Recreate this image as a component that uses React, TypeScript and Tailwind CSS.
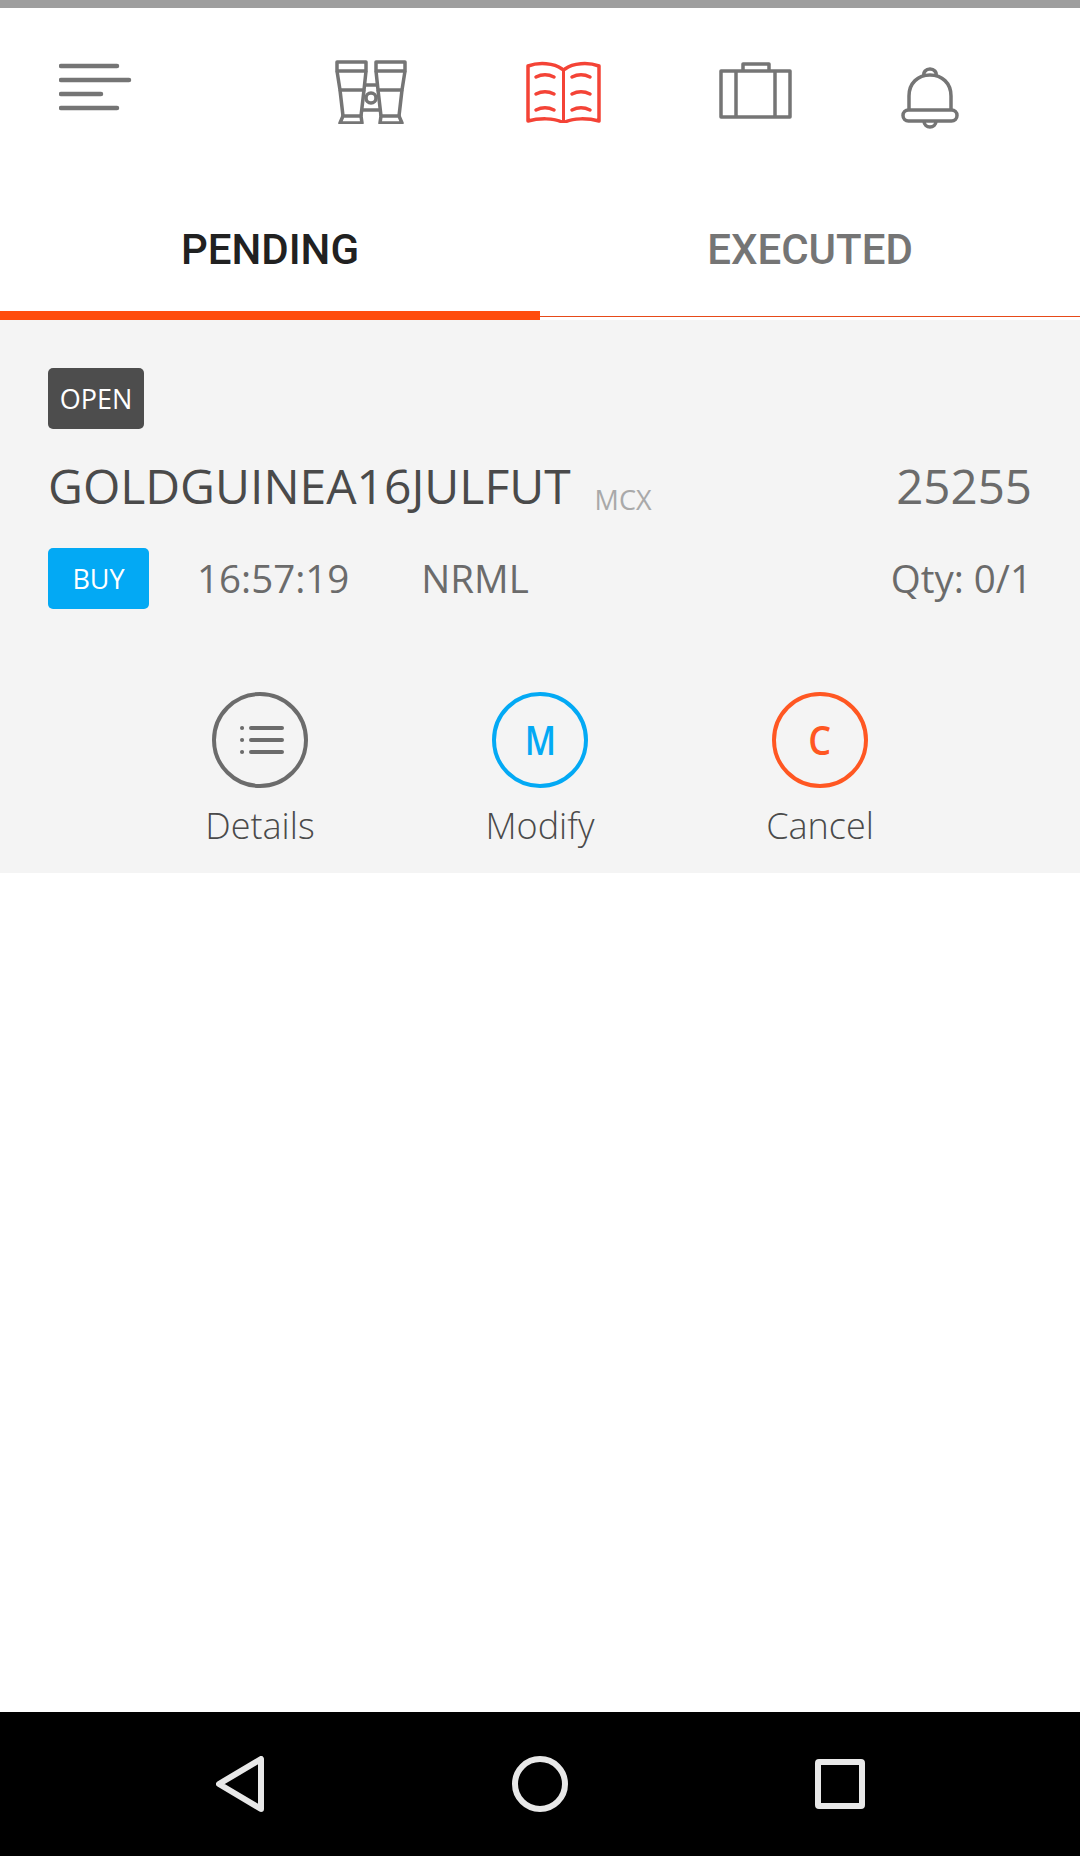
const openSans = '[font-family:"Open_Sans",sans-serif]'

function MenuIcon() {
  return (
    <svg width="73" height="50" viewBox="0 0 73 50" fill="none" stroke="#757575" strokeWidth="4.5" strokeLinecap="round">
      <path d="M2 3h56M2 17h68M2 31h40M2 45h56" />
    </svg>
  )
}

function BinocularsIcon() {
  return (
    <svg width="72" height="64" viewBox="0 0 72 64" fill="none" stroke="#757575" strokeWidth="3.5" strokeLinejoin="round">
      <path d="M2 2h29v9H2zM41 2h29v9H41z" />
      <path d="M2 11l3 19h24l2-19M41 11l2 19h24l3-19" />
      <path d="M5 30l3 26M29 30l-3 26M43 30l3 26M67 30l-3 26" />
      <path d="M8 56l-3 7h22l-1-7zM46 56l-1 7h22l-3-7zM8 56h18M46 56h18" />
      <path d="M28 25h16M27 50h18" />
      <circle cx="36" cy="38" r="5" />
    </svg>
  )
}

function BookIcon() {
  return (
    <svg width="75" height="62" viewBox="0 0 75 62" fill="none" stroke="#f44336" strokeWidth="3.5" strokeLinecap="round" strokeLinejoin="round">
      <path d="M36 8C28 2 13 1 2 5v55c11-3 26-3 34 1 1 1 2 1 3 0 8-4 23-4 34-1V5C62 1 47 2 39 8c-1 1-2 1-3 0z" />
      <path d="M37.500 9v51" strokeWidth="3" />
      <path d="M10 16c6-3 12-3 18 0M10 33c6-3 12-3 18 0M10 49c6-3 12-3 18 0M46 16c6-3 12-3 18 0M46 33c6-3 12-3 18 0M46 49c6-3 12-3 18 0" />
    </svg>
  )
}

function BriefcaseIcon() {
  return (
    <svg width="73" height="57" viewBox="0 0 73 57" fill="none" stroke="#757575" strokeWidth="3.5" strokeLinejoin="round">
      <path d="M2 9h69v46H2zM24 9V2h26v7M17 9v46M56 9v46" />
    </svg>
  )
}

function BellIcon() {
  return (
    <svg width="58" height="62" viewBox="0 0 58 62" fill="none" stroke="#757575" strokeWidth="3.5" strokeLinejoin="round">
      <path d="M8 43V29C8 16 17 8 29 8s21 8 21 21v14" />
      <rect x="2" y="43" width="54" height="11" rx="5.5" />
      <path d="M23 9c-1-4 2-7 6-7s7 3 6 7M23 54c0 4 3 6 6 6s6-2 6-6" />
    </svg>
  )
}

function DetailsGlyph() {
  return (
    <svg width="44" height="30" viewBox="0 0 44 30" fill="none" stroke="#6b6b6b" strokeWidth="4" strokeLinecap="round">
      <path d="M11 3h31M11 15h31M11 27h31" />
      <path d="M2 3h.1M2 15h.1M2 27h.1" />
    </svg>
  )
}

function OrderAction({ label, ring, children }: { label: string; ring: string; children: React.ReactNode }) {
  return (
    <div className="flex w-[160px] flex-col items-center">
      <div className={`flex h-[96px] w-[96px] items-center justify-center rounded-full border-4 ${ring}`}>{children}</div>
      <span className="mt-[13px] text-[36px] leading-[50px] font-light text-[#4a4a4a]">{label}</span>
    </div>
  )
}

export default function App() {
  return (
    <div className={`flex h-[1856px] w-[1080px] flex-col bg-white ${openSans}`}>
      <div className="h-2 bg-[#9e9e9e]" />

      <header className="flex h-[172px] items-start pl-[59px]">
        <div className="mt-[55px]"><MenuIcon /></div>
        <div className="mt-[52px] ml-[203px]"><BinocularsIcon /></div>
        <div className="mt-[53px] ml-[119px]"><BookIcon /></div>
        <div className="mt-[54px] ml-[118px]"><BriefcaseIcon /></div>
        <div className="mt-[59px] ml-[109px]"><BellIcon /></div>
      </header>

      <nav className="grid h-[140px] grid-cols-2 text-[42px] leading-[48px] font-medium [font-family:Roboto,sans-serif]">
        <div className="flex justify-center border-b-[9px] border-[#ff4d0d] pt-[46px] text-[#212121]">PENDING</div>
        <div className="relative flex justify-center pt-[46px] text-[#757575]">
          EXECUTED
          <span className="absolute right-0 bottom-[3px] left-0 h-px bg-[#e64a19]" />
        </div>
      </nav>

      <section className="flex h-[553px] flex-col bg-[#f4f4f4] px-12 pt-12">
        <span className="flex h-[61px] w-[96px] items-center justify-center rounded-[5px] bg-[#4d4d4d] pt-0.5 text-[27px] text-white">OPEN</span>

        <div className="mt-[22px] flex h-[70px] items-center">
          <span className="text-[48px] leading-[70px] text-[#4a4a4a]">GOLDGUINEA16JULFUT</span>
          <span className="mt-[28px] ml-6 text-[27px] text-[#a9a9a9]">MCX</span>
          <span className="ml-auto text-[47.5px] leading-[70px] text-[#6b6b6b]">25255</span>
        </div>

        <div className="mt-[27px] flex h-[61px] items-center text-[38.5px] text-[#6b6b6b]">
          <span className="flex h-[61px] w-[101px] items-center justify-center rounded-[5px] bg-[#03a9f4] pt-0.5 text-[27px] text-white">BUY</span>
          <span className="ml-12">16:57:19</span>
          <span className="ml-[72px]">NRML</span>
          <span className="ml-auto">Qty: 0/1</span>
        </div>

        <div className="mt-[83px] flex justify-center gap-[120px]">
          <OrderAction label="Details" ring="border-[#6b6b6b]">
            <span className="ml-1 flex"><DetailsGlyph /></span>
          </OrderAction>
          <OrderAction label="Modify" ring="border-[#03a9f4]">
            <span className="scale-x-85 text-[40px] font-semibold text-[#03a9f4]">M</span>
          </OrderAction>
          <OrderAction label="Cancel" ring="border-[#ff5722]">
            <span className="scale-x-90 text-[40px] font-semibold text-[#ff5722]">C</span>
          </OrderAction>
        </div>
      </section>

      <div className="flex-1" />

      <footer className="flex h-[144px] items-center justify-between bg-black pr-[215px] pl-[216px]">
        <svg width="48" height="56" viewBox="0 0 48 56" fill="none" stroke="#e8e8e8" strokeWidth="6" strokeLinejoin="round">
          <path d="M45 3v50L3 28z" />
        </svg>
        <svg width="56" height="56" viewBox="0 0 56 56" fill="none" stroke="#e8e8e8" strokeWidth="6">
          <circle cx="28" cy="28" r="25" />
        </svg>
        <svg width="50" height="50" viewBox="0 0 50 50" fill="none" stroke="#e8e8e8" strokeWidth="6" strokeLinejoin="round">
          <rect x="3" y="3" width="44" height="44" rx="1" />
        </svg>
      </footer>
    </div>
  )
}
